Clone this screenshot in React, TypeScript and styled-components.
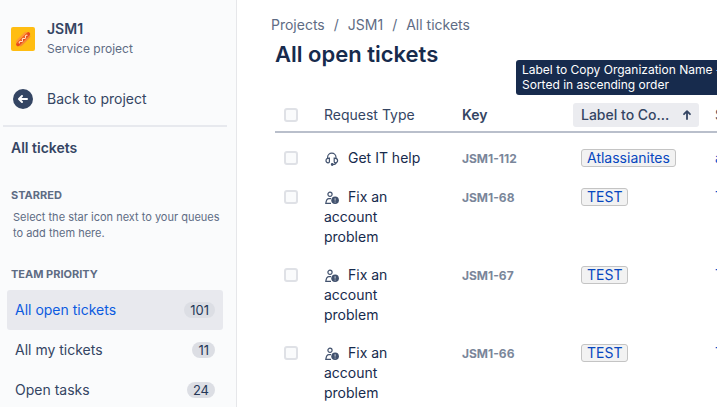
import React from "react";
import styled, { createGlobalStyle } from "styled-components";

const GlobalStyle = createGlobalStyle`
  *, *::before, *::after { box-sizing: border-box; }
  html, body { margin: 0; background: #ffffff; }
  body {
    font-family: Inter, "Liberation Sans", sans-serif;
    font-size: 14px;
    line-height: 20px;
    color: #172b4d;
    overflow: hidden;
  }
  a { color: inherit; text-decoration: none; }
  h1, h2, p, ul, ol { margin: 0; padding: 0; }
  ul, ol { list-style: none; }
`;

const Page = styled.div`
  display: flex;
  height: 100vh;
  overflow: hidden;
`;

const Sidebar = styled.aside`
  flex: 0 0 237px;
  display: flex;
  flex-direction: column;
  background: #fafbfc;
  border-right: 1px solid #e6e7ea;
  color: #344563;
`;

const Project = styled.header`
  display: flex;
  align-items: center;
  gap: 12px;
  padding: 19px 11px 0;
`;

const ProjectName = styled.div`
  font-weight: 600;
  color: #344563;
`;

const ProjectKind = styled.div`
  font-size: 12px;
  line-height: 20px;
  color: #5e6c84;
`;

const BackLink = styled.a`
  display: flex;
  align-items: center;
  gap: 14px;
  margin: 30px 9px 0 3px;
  padding: 0 10px 16px;
  border-bottom: 2px solid #e7e9ee;
`;

const AllTickets = styled.a`
  padding: 11px 11px 0;
  font-weight: 600;
`;

const SectionTitle = styled.h2<{ $gap: number }>`
  padding: ${(p) => p.$gap}px 11px 0;
  font-size: 11px;
  line-height: 16px;
  font-weight: 700;
  color: #5e6c84;
`;

const Hint = styled.p`
  padding: 6px 11px 0 13px;
  font-size: 11px;
  line-height: 16px;
  color: #5e6c84;
`;

const QueueList = styled.ul`
  padding: 8px 13px 0 7px;
`;

const QueueLink = styled.a<{ $active?: boolean }>`
  display: flex;
  align-items: center;
  justify-content: space-between;
  height: 40px;
  padding: 0 8px;
  border-radius: 3px;
  background: ${(p) => (p.$active ? "#e8e9ee" : "transparent")};
  && { color: ${(p) => (p.$active ? "#0c5be0" : "#344563")}; }
`;

const Count = styled.span`
  padding: 0 6px;
  border-radius: 8px;
  background: #dcdee4;
  color: #253858;
  font-size: 13px;
  line-height: 16px;
`;

const Main = styled.main`
  flex: 1;
  min-width: 0;
  padding: 15px 0 0 38px;
  overflow: hidden;
`;

const Crumbs = styled.ol`
  display: flex;
  margin-left: -4px;
  color: #5e6c84;

  li + li::before {
    content: "/";
    padding: 0 9px;
  }
`;

const Title = styled.h1`
  padding-top: 5px;
  font-size: 22px;
  line-height: 28px;
  font-weight: 600;
`;

const Table = styled.table`
  width: 100%;
  min-width: 540px;
  margin-top: 31px;
  table-layout: fixed;
  border-collapse: separate;
  border-spacing: 0;
`;

const HeadCell = styled.th<{ $strong?: boolean }>`
  position: relative;
  height: 34px;
  padding: 2px 0 3px;
  border-bottom: 2px solid #b9bfcb;
  text-align: left;
  font-weight: ${(p) => (p.$strong ? 600 : 400)};
  color: #344563;
`;

const HeadSpace = styled.tr`
  height: 6px;
`;

const Cell = styled.td`
  padding: 9px 0;
  vertical-align: top;
`;

const TypeCell = styled(Cell)`
  padding-right: 50px;
  white-space: normal;
`;

const WideTypeCell = styled(Cell)`
  white-space: nowrap;
`;

const Check = styled.input`
  appearance: none;
  display: block;
  width: 14px;
  height: 14px;
  margin: 0 0 0 9px;
  border: 2px solid #dfe1e6;
  border-radius: 3px;
  background: #fafbfc;

  td & { margin-top: 3px; }
`;

const SortButton = styled.button`
  display: flex;
  align-items: center;
  justify-content: space-between;
  width: 126px;
  height: 24px;
  padding: 0 6px 0 8px;
  border: 0;
  border-radius: 3px;
  background: #ebecf0;
  color: #344563;
  font: inherit;
  font-weight: 500;
`;

const Tooltip = styled.div`
  position: absolute;
  right: -61px;
  bottom: 36px;
  width: 260px;
  padding: 2px 6px 3px;
  border-radius: 3px;
  background: #172b4d;
  color: #ffffff;
  font-size: 12px;
  line-height: 15px;
  font-weight: 400;
  white-space: nowrap;
`;

const TypeIcon = styled.svg`
  width: 14px;
  height: 14px;
  margin: 0 9px 0 1px;
  vertical-align: -3px;
`;

const KeyLink = styled.a`
  font-size: 12px;
  font-weight: 700;
  && { color: #7a869a; }
`;

const Label = styled.a`
  display: inline-block;
  padding: 0 5px;
  margin: 1px 0 0 8px;
  border: 1px solid #c4c4c4;
  border-radius: 3px;
  background: #f2f2f2;
  line-height: 16px;
  && { color: #0747bf; }
`;

const ValueLink = styled.a`
  && { color: #0052cc; }
`;

const HotdogLogo = () => (
  <svg width="24" height="24" viewBox="0 0 24 24" role="img" aria-label="JSM1">
    <rect width="24" height="24" rx="2" fill="#ffbd12" />
    <g transform="rotate(-45 12 12)" strokeLinecap="round">
      <path d="M6.5 10.4h11" stroke="#ff9a35" strokeWidth="4.4" />
      <path d="M6.5 13.8h11" stroke="#f58a36" strokeWidth="4.4" />
      <path d="M4.6 12.2h14.8" stroke="#e8481c" strokeWidth="3.6" />
      <path d="M5.4 11.3h13" stroke="#f7712c" strokeWidth="1" />
      <path d="M6.5 12.3q1-1.6 2.2 0t2.2 0 2.2 0 2.2 0 2.2 0" fill="none" stroke="#ffe9c8" strokeWidth="1" />
    </g>
  </svg>
);

const BackIcon = () => (
  <svg width="20" height="20" viewBox="0 0 20 20" aria-hidden="true">
    <circle cx="10" cy="10" r="10" fill="#344563" />
    <path d="M14 10H6.4M9 7l-3 3 3 3" fill="none" stroke="#fff" strokeWidth="2" strokeLinecap="round" strokeLinejoin="round" />
  </svg>
);

const ArrowUp = () => (
  <svg width="12" height="12" viewBox="0 0 12 12" aria-hidden="true">
    <path d="M6 10V2.4M3 5.2l3-3 3 3" fill="none" stroke="#344563" strokeWidth="1.8" strokeLinecap="round" strokeLinejoin="round" />
  </svg>
);

const HeadsetIcon = () => (
  <TypeIcon viewBox="0 0 14 14" fill="none" stroke="#42526e" strokeWidth="1.2" aria-hidden="true">
    <path d="M2.6 6.6V5.4a4.2 4.2 0 0 1 8.4 0v1.2" />
    <path d="M4.4 6.2C2 6.2 1 7.2 1 8.6s.8 2.2 2.2 2.2c.8 0 1.2-.4 1.2-1zM9.2 6.2c2.4 0 3.4 1 3.4 2.4s-.8 2.2-2.2 2.2c-.8 0-1.2-.4-1.2-1z" />
    <path d="M11 10.8c0 1.2-1 1.7-3 1.7" />
    <circle cx="7.2" cy="12.5" r=".8" fill="#42526e" />
  </TypeIcon>
);

const AccountIcon = () => (
  <TypeIcon viewBox="0 0 14 14" aria-hidden="true">
    <circle cx="5" cy="3.3" r="2.1" fill="none" stroke="#42526e" strokeWidth="1.2" />
    <path d="M6 7.6H4C2 7.6 1.2 9 .8 12.4H6" fill="none" stroke="#42526e" strokeWidth="1.2" />
    <circle cx="10.1" cy="9.3" r="3.8" fill="#42526e" />
    <path d="M10.1 7.2v2.4M10.1 10.6v.9" stroke="#c9ced8" strokeWidth="1" />
  </TypeIcon>
);

const queues = [
  { name: "All open tickets", count: 101, active: true },
  { name: "All my tickets", count: 11 },
  { name: "Open tasks", count: 24 },
];

const tickets = [
  { key: "JSM1-112", type: "Get IT help", label: "Atlassianites", value: "a" },
  { key: "JSM1-68", type: "Fix an account problem", label: "TEST", value: "T" },
  { key: "JSM1-67", type: "Fix an account problem", label: "TEST", value: "T" },
  { key: "JSM1-66", type: "Fix an account problem", label: "TEST", value: "T" },
];

export default function App() {
  return (
    <>
      <GlobalStyle />
      <Page>
        <Sidebar>
          <Project>
            <HotdogLogo />
            <div>
              <ProjectName>JSM1</ProjectName>
              <ProjectKind>Service project</ProjectKind>
            </div>
          </Project>
          <BackLink href="#project">
            <BackIcon />
            Back to project
          </BackLink>
          <AllTickets href="#all">All tickets</AllTickets>
          <SectionTitle $gap={29}>STARRED</SectionTitle>
          <Hint>Select the star icon next to your queues to add them here.</Hint>
          <SectionTitle $gap={25}>TEAM PRIORITY</SectionTitle>
          <QueueList>
            {queues.map((q) => (
              <li key={q.name}>
                <QueueLink href="#queue" $active={q.active}>
                  {q.name}
                  <Count>{q.count}</Count>
                </QueueLink>
              </li>
            ))}
          </QueueList>
        </Sidebar>
        <Main>
          <nav aria-label="Breadcrumbs">
            <Crumbs>
              <li><a href="#projects">Projects</a></li>
              <li><a href="#jsm1">JSM1</a></li>
              <li><a href="#all">All tickets</a></li>
            </Crumbs>
          </nav>
          <Title>All open tickets</Title>
          <Table>
            <colgroup>
              <col width="49" />
              <col width="138" />
              <col width="111" />
              <col width="142" />
              <col />
            </colgroup>
            <thead>
              <tr>
                <HeadCell><Check type="checkbox" aria-label="Select all tickets" /></HeadCell>
                <HeadCell>Request Type</HeadCell>
                <HeadCell $strong>Key</HeadCell>
                <HeadCell aria-sort="ascending">
                  <SortButton type="button" aria-describedby="sort-tip">
                    Label to Co...
                    <ArrowUp />
                  </SortButton>
                  <Tooltip role="tooltip" id="sort-tip">
                    Label to Copy Organization Name -<br />
                    Sorted in ascending order
                  </Tooltip>
                </HeadCell>
                <HeadCell>S</HeadCell>
              </tr>
            </thead>
            <tbody>
              <HeadSpace aria-hidden="true" />
              {tickets.map((t) => {
                const help = t.type === "Get IT help";
                const Type = help ? WideTypeCell : TypeCell;
                return (
                  <tr key={t.key}>
                    <Cell><Check type="checkbox" aria-label={`Select ${t.key}`} /></Cell>
                    <Type>
                      {help ? <HeadsetIcon /> : <AccountIcon />}
                      {t.type}
                    </Type>
                    <Cell><KeyLink href="#ticket">{t.key}</KeyLink></Cell>
                    <Cell><Label href="#label">{t.label}</Label></Cell>
                    <Cell><ValueLink href="#value">{t.value}</ValueLink></Cell>
                  </tr>
                );
              })}
            </tbody>
          </Table>
        </Main>
      </Page>
    </>
  );
}
